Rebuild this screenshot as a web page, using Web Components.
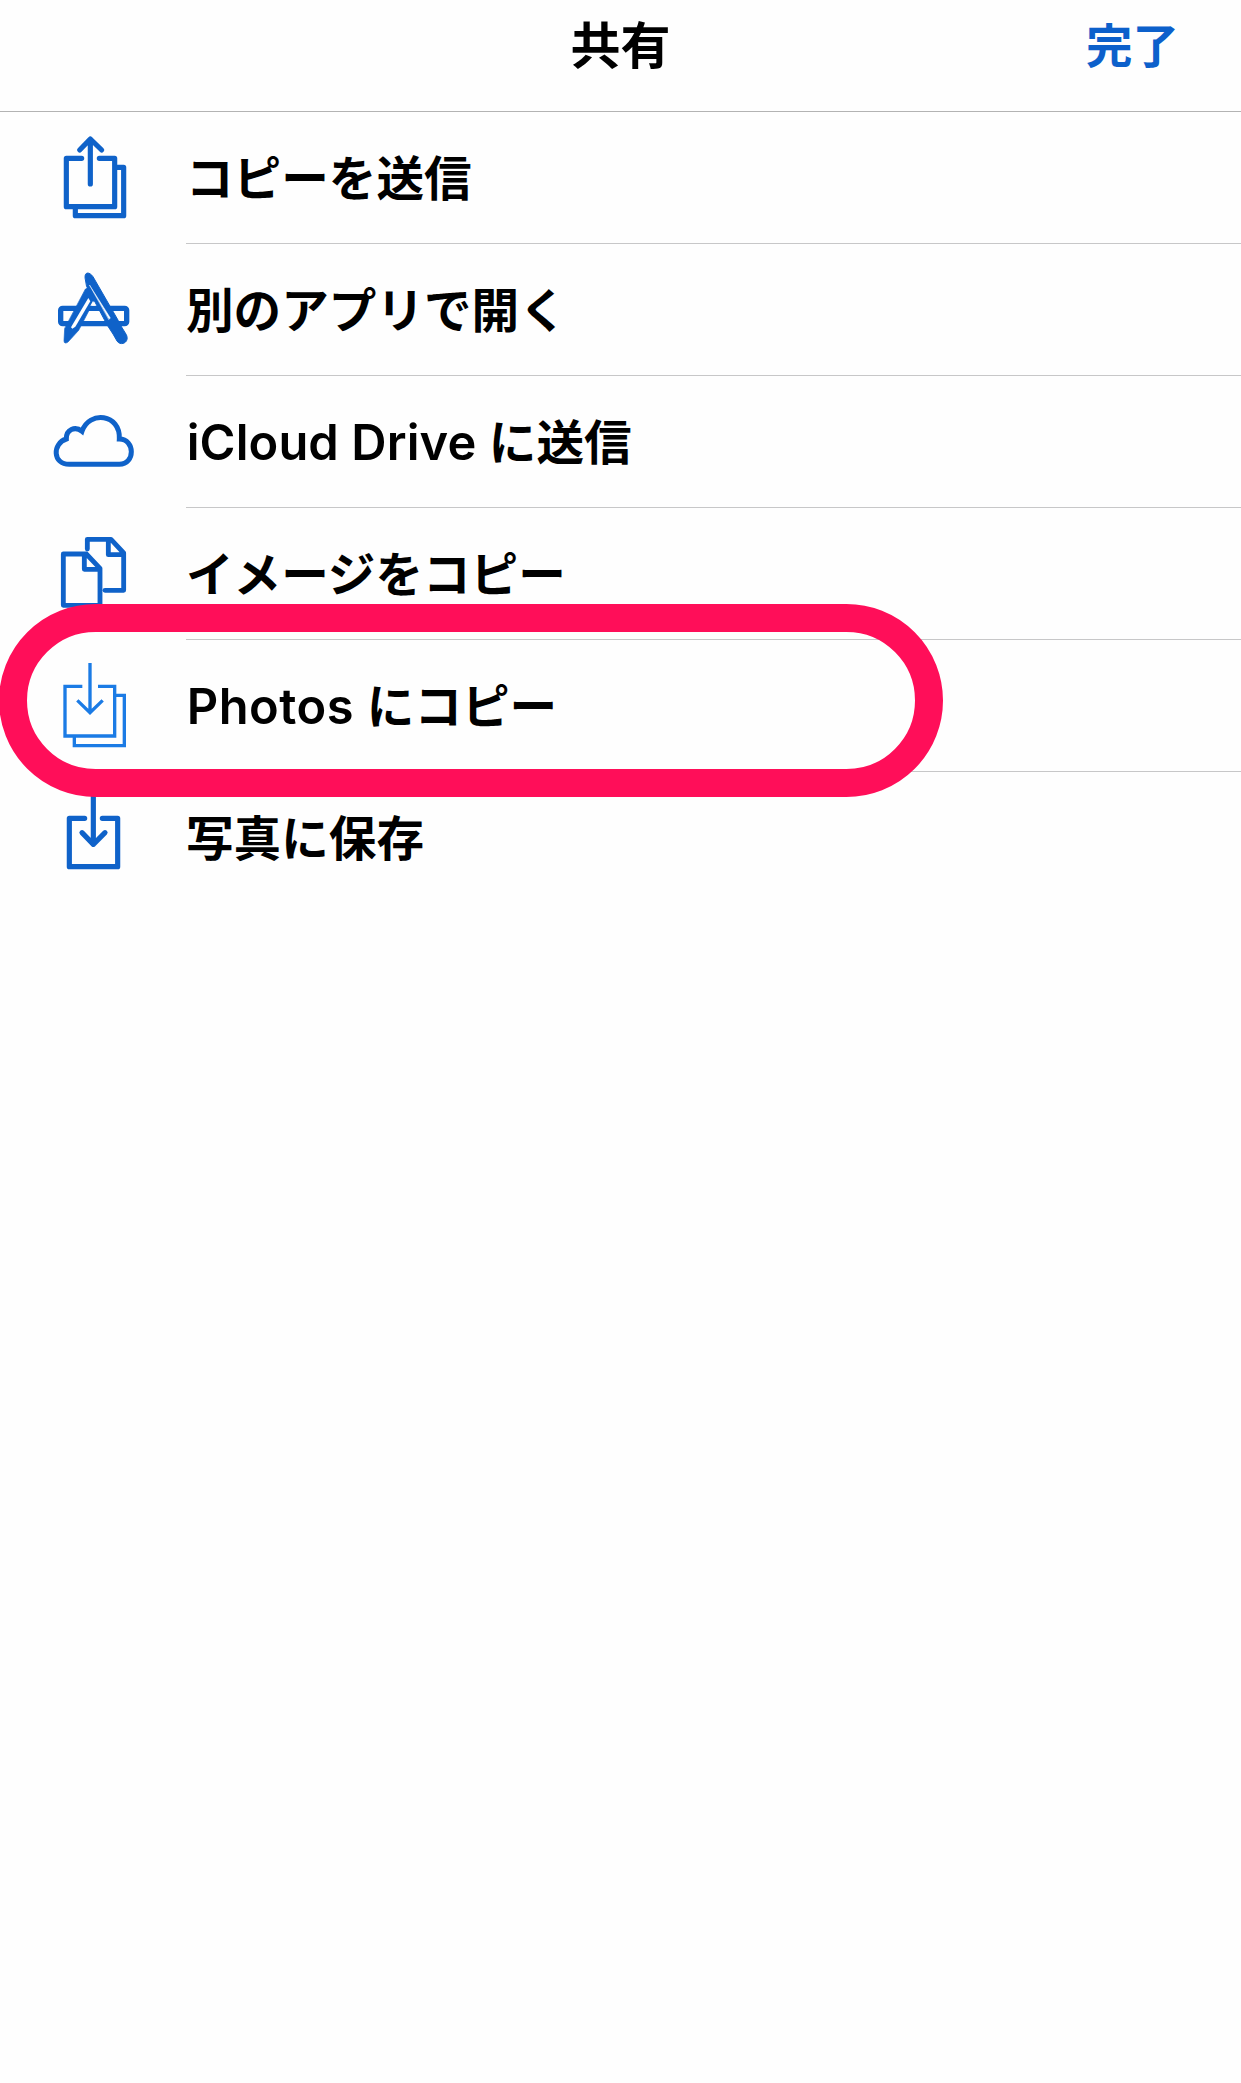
<!DOCTYPE html>
<html lang="ja">
<head>
<meta charset="utf-8">
<title>共有</title>
<style>
html,body{margin:0;background:#fefefe}
body{font-family:Inter,"Noto Sans CJK JP",sans-serif;color:#000;min-height:2083px;overflow:hidden}
.latin{font-size:48.8px;line-height:0;letter-spacing:.12px;margin-left:.7px}
.latin.wide{letter-spacing:.5px}
</style>
</head>
<body>
<share-sheet>
  <sheet-header slot="header">共有<span slot="action">完了</span></sheet-header>
  <share-row icon="send">コピーを送信</share-row>
  <share-row icon="apps">別のアプリで開く</share-row>
  <share-row icon="cloud"><span class="latin">iCloud Drive </span>に送信</share-row>
  <share-row icon="copy">イメージをコピー</share-row>
  <share-row icon="photos" marked><span class="latin wide">Photos </span>にコピー</share-row>
  <share-row icon="save" last>写真に保存</share-row>
</share-sheet>
<script>
const icons = {
  send: `<g transform="translate(0 24)" stroke-width="15.5"><path d="M125 115H79V260H224V115H178M231 142H251V287H106V267M151 192V57M119 90L151 57L185 90"/></g>`,
  apps: `<g transform="translate(0 33)" stroke-width="16"><rect x="62" y="160" width="198" height="46" rx="6"/>
    <path d="M136 103Q144 93 156 101L166 130L116 226L84 261Q72 269 72 257L74 221Z" fill="currentColor" stroke="currentColor" stroke-width="2"/>
    <path d="M135 67C134 49 149 51 159 65L235 197L243 213L259 239C270 262 242 275 231 258L219 237L202 211L140 94Z" fill="currentColor" stroke="currentColor" stroke-width="3"/>
    <path d="M145 129L151 139L106 215L97 221L93 217Z" fill="#fefefe" stroke="none"/>
    <path d="M159 138L151 152H167Z" fill="#fefefe" stroke="none"/>
    <path d="M149 91L211 189L207 193Z" fill="#fefefe" stroke="#fefefe" stroke-width="1.5"/></g>`,
  cloud: `<g transform="translate(0 57)" stroke-width="15"><path stroke-linejoin="miter" d="M88 208C37 208 37 145 79 132C78 104 105 92 126 109C147 46 242 56 238 132C286 133 286 208 238 208Z"/></g>`,
  copy: `<g transform="translate(0 51)" stroke-width="14.5"><path d="M70 87H139L180 130V241H70ZM133 87V133H180M142 72V43H213L251 84V196H195M205 43V89H251"/></g>`,
  photos: `<g transform="translate(0 30)" stroke-width="10" stroke-linecap="butt" stroke-linejoin="miter"><path d="M127 109H75V258H224V109H174M228 136H253V287H103V262M150 39V186M112 151L150 188L188 151"/></g>`,
  save: `<g transform="translate(0 24)" stroke-width="15.5"><path d="M134 115H88V260H233V115H187M160 30V193M126 158L160 193L195 158"/></g>`
};

class ShareSheet extends HTMLElement {
  constructor() {
    super();
    this.attachShadow({mode: 'open'}).innerHTML = `
      <style>:host{display:flex;flex-direction:column;width:100%}</style>
      <slot name="header"></slot><slot></slot>`;
  }
}

class SheetHeader extends HTMLElement {
  constructor() {
    super();
    this.attachShadow({mode: 'open'}).innerHTML = `
      <style>
        :host{display:grid;grid-template-columns:1fr auto 1fr;align-items:start;box-sizing:border-box;height:112px;border-bottom:1px solid #b3b3b3;padding:10px 62px 0;font-weight:600;font-size:50px;line-height:72px}
        .title{grid-column:2}
        .action{justify-self:end;color:#0c60cb;font-size:46.5px;line-height:72px}
      </style>
      <div class="title"><slot></slot></div><div class="action"><slot name="action"></slot></div>`;
  }
}

class ShareRow extends HTMLElement {
  constructor() {
    super();
    this.attachShadow({mode: 'open'}).innerHTML = `
      <style>
        :host{display:flex;position:relative;height:132px;font-weight:600;font-size:47.6px}
        .icon{width:110px;height:132px;margin:0 36px 0 40px;flex:none;color:#0f62c9}
        :host([icon="photos"]) .icon{color:#1b7be5}
        svg{display:block;width:110px;height:132px}
        .label{flex:1;box-sizing:border-box;height:132px;line-height:134px;border-bottom:1px solid #c7c7c8;white-space:nowrap}
        :host([last]) .label{border:0}
        .ring{display:none}
        :host([marked]) .ring{display:block;position:absolute;z-index:2;left:-1px;top:-36px;width:944px;height:193px;box-sizing:border-box;border:28.5px solid #ff0e59;border-radius:97px}
      </style>
      <div class="icon"><svg viewBox="0 0 330 396" fill="none" stroke="currentColor" stroke-linecap="round" stroke-linejoin="round">${icons[this.getAttribute('icon')]}</svg></div>
      <div class="label"><slot></slot></div><div class="ring"></div>`;
  }
}

customElements.define('share-sheet', ShareSheet);
customElements.define('sheet-header', SheetHeader);
customElements.define('share-row', ShareRow);
</script>
</body>
</html>
